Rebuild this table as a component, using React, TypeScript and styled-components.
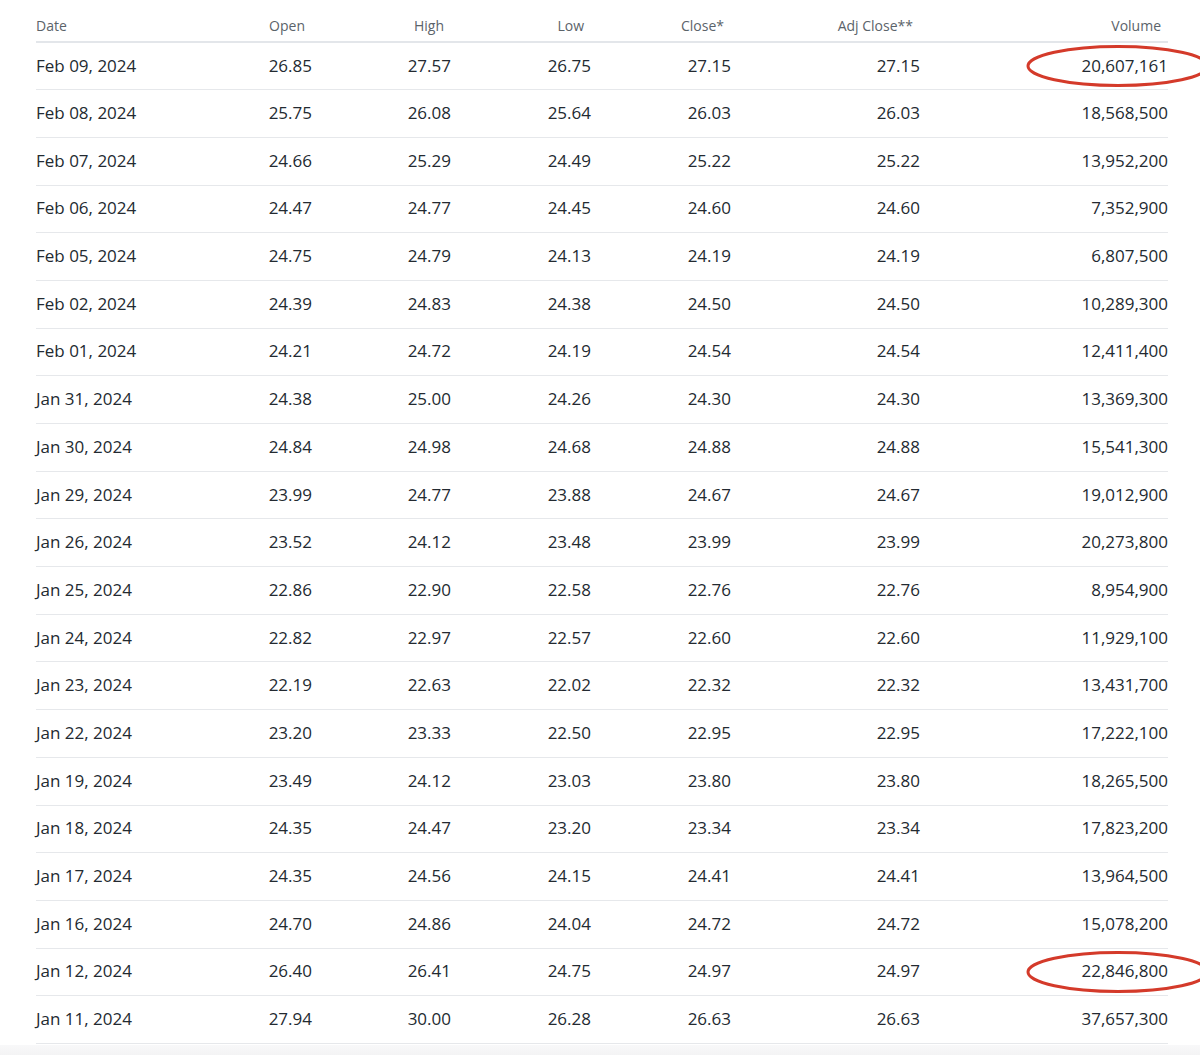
import React from 'react'
import styled, { createGlobalStyle } from 'styled-components'

const GlobalStyle = createGlobalStyle`
  html, body {
    margin: 0;
    padding: 0;
    background: #ffffff;
    overflow: hidden;
  }
  body {
    font-family: 'Open Sans', 'Noto Sans', sans-serif;
    color: #232a31;
  }
`

const Page = styled.div`
  width: 1200px;
  height: 1055px;
  display: flex;
  flex-direction: column;
  overflow: hidden;
`

const Wrap = styled.div`
  padding: 0 32px 0 36px;
`

const Table = styled.table`
  width: 1132px;
  border-collapse: collapse;
  table-layout: fixed;
`

const HeadCell = styled.th<{ $left?: boolean; $w: number }>`
  width: ${({ $w }) => $w}px;
  height: 42px;
  box-sizing: border-box;
  padding: 0 ${({ $left }) => ($left ? 0 : 7)}px 6px 0;
  vertical-align: bottom;
  text-align: ${({ $left }) => ($left ? 'left' : 'right')};
  font-size: 14px;
  font-weight: 400;
  line-height: 19px;
  color: #5b636a;
  border-bottom: 2px solid #e3e6ea;
`

const Row = styled.tr`
  height: 47.7px;
  border-bottom: 1px solid #e6e8eb;
`

const Cell = styled.td<{ $left?: boolean }>`
  position: relative;
  padding: 0 0 2px 0;
  text-align: ${({ $left }) => ($left ? 'left' : 'right')};
  font-size: 17px;
  line-height: 23px;
  color: #232a31;
  white-space: nowrap;
`

const Ring = styled.svg`
  position: absolute;
  right: -42px;
  top: 50%;
  transform: translateY(-50%);
  overflow: visible;
  pointer-events: none;
`

const Shade = styled.div`
  flex: 1;
  margin-top: 1px;
  background: linear-gradient(#f8f8f9, #f3f3f4);
`

const columns = [
  { label: 'Date', w: 136, left: true },
  { label: 'Open', w: 140 },
  { label: 'High', w: 139 },
  { label: 'Low', w: 140 },
  { label: 'Close*', w: 140 },
  { label: 'Adj Close**', w: 189 },
  { label: 'Volume', w: 248 },
]

const rows: [string, string, string, string, string, string, string, boolean?][] = [
  ['Feb 09, 2024', '26.85', '27.57', '26.75', '27.15', '27.15', '20,607,161', true],
  ['Feb 08, 2024', '25.75', '26.08', '25.64', '26.03', '26.03', '18,568,500'],
  ['Feb 07, 2024', '24.66', '25.29', '24.49', '25.22', '25.22', '13,952,200'],
  ['Feb 06, 2024', '24.47', '24.77', '24.45', '24.60', '24.60', '7,352,900'],
  ['Feb 05, 2024', '24.75', '24.79', '24.13', '24.19', '24.19', '6,807,500'],
  ['Feb 02, 2024', '24.39', '24.83', '24.38', '24.50', '24.50', '10,289,300'],
  ['Feb 01, 2024', '24.21', '24.72', '24.19', '24.54', '24.54', '12,411,400'],
  ['Jan 31, 2024', '24.38', '25.00', '24.26', '24.30', '24.30', '13,369,300'],
  ['Jan 30, 2024', '24.84', '24.98', '24.68', '24.88', '24.88', '15,541,300'],
  ['Jan 29, 2024', '23.99', '24.77', '23.88', '24.67', '24.67', '19,012,900'],
  ['Jan 26, 2024', '23.52', '24.12', '23.48', '23.99', '23.99', '20,273,800'],
  ['Jan 25, 2024', '22.86', '22.90', '22.58', '22.76', '22.76', '8,954,900'],
  ['Jan 24, 2024', '22.82', '22.97', '22.57', '22.60', '22.60', '11,929,100'],
  ['Jan 23, 2024', '22.19', '22.63', '22.02', '22.32', '22.32', '13,431,700'],
  ['Jan 22, 2024', '23.20', '23.33', '22.50', '22.95', '22.95', '17,222,100'],
  ['Jan 19, 2024', '23.49', '24.12', '23.03', '23.80', '23.80', '18,265,500'],
  ['Jan 18, 2024', '24.35', '24.47', '23.20', '23.34', '23.34', '17,823,200'],
  ['Jan 17, 2024', '24.35', '24.56', '24.15', '24.41', '24.41', '13,964,500'],
  ['Jan 16, 2024', '24.70', '24.86', '24.04', '24.72', '24.72', '15,078,200'],
  ['Jan 12, 2024', '26.40', '26.41', '24.75', '24.97', '24.97', '22,846,800', true],
  ['Jan 11, 2024', '27.94', '30.00', '26.28', '26.63', '26.63', '37,657,300'],
]

const Circled = () => (
  <Ring width="184" height="42" viewBox="0 0 184 42">
    <ellipse cx="92" cy="21" rx="90" ry="19.5" fill="none" stroke="#d43a2a" strokeWidth="3" />
  </Ring>
)

export default function App() {
  return (
    <Page>
      <GlobalStyle />
      <Wrap>
        <Table>
          <thead>
            <tr>
              {columns.map((c) => (
                <HeadCell key={c.label} $w={c.w} $left={c.left}>
                  {c.label}
                </HeadCell>
              ))}
            </tr>
          </thead>
          <tbody>
            {rows.map((r) => (
              <Row key={r[0]}>
                <Cell $left>{r[0]}</Cell>
                <Cell>{r[1]}</Cell>
                <Cell>{r[2]}</Cell>
                <Cell>{r[3]}</Cell>
                <Cell>{r[4]}</Cell>
                <Cell>{r[5]}</Cell>
                <Cell>
                  {r[7] && <Circled />}
                  {r[6]}
                </Cell>
              </Row>
            ))}
          </tbody>
        </Table>
      </Wrap>
      <Shade />
    </Page>
  )
}
